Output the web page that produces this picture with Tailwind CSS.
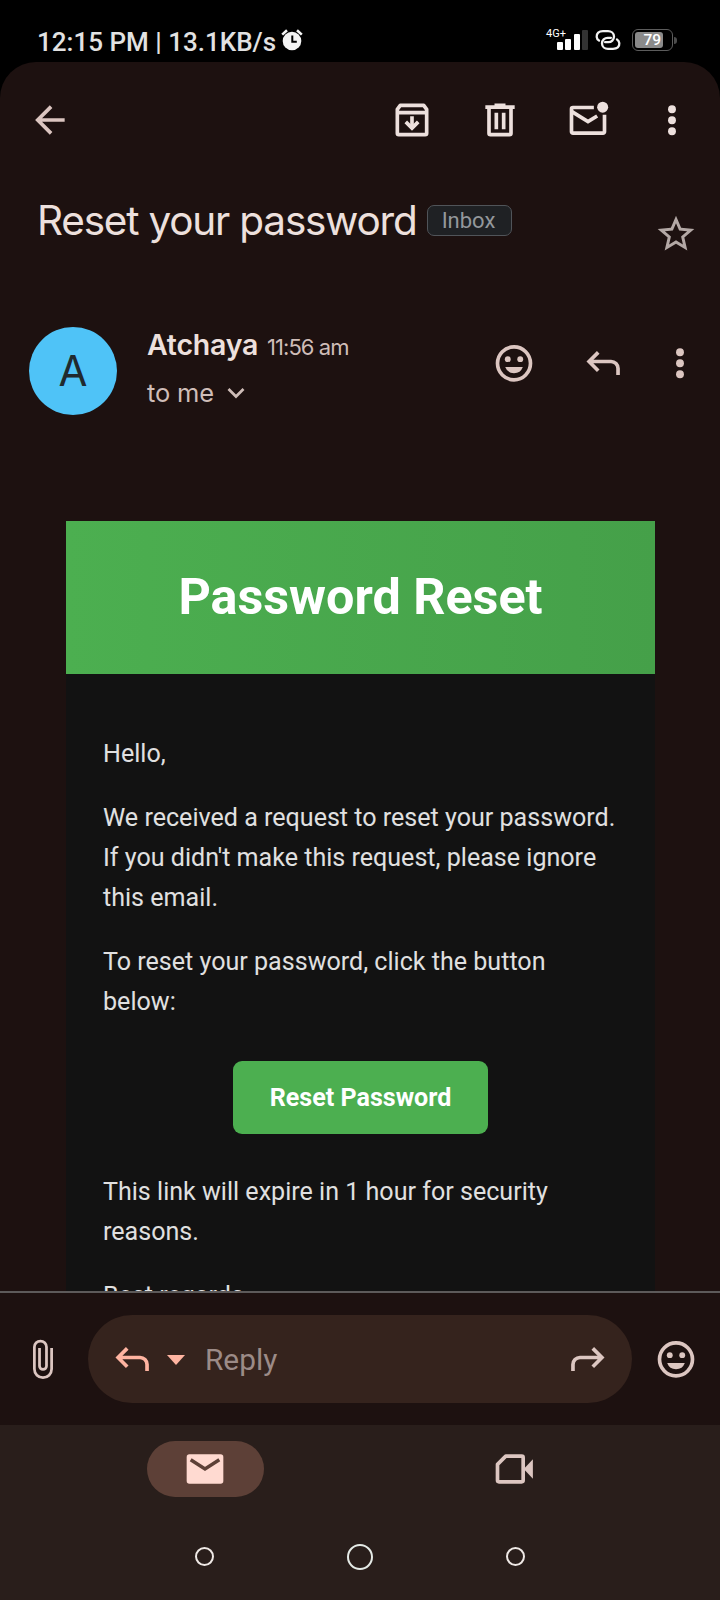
<!DOCTYPE html>
<html lang="en">
<head>
<meta charset="utf-8">
<title>Reset your password</title>
<script src="https://cdn.jsdelivr.net/npm/@tailwindcss/browser@4"></script>
</head>
<body class="bg-black">
<svg class="hidden">
  <symbol id="smile" viewBox="0 0 24 24"><circle cx="12" cy="12.200" r="9" fill="none" stroke="currentColor" stroke-width="2"/><circle cx="8.6" cy="9.9" r="1.6" fill="currentColor"/><circle cx="15.4" cy="9.9" r="1.6" fill="currentColor"/><path d="M7.2 14.200h9.6a5.1 5.1 0 0 1-9.6 0z" fill="currentColor"/></symbol>
  <symbol id="reply" viewBox="0 0 24 24"><path d="M9.4 6.2 4.4 11.2l5 5M4.600 11.2h11.800a3.8 3.8 0 0 1 3.800 3.8v3.6" fill="none" stroke="currentColor" stroke-width="2"/></symbol>
  <symbol id="dots" viewBox="0 0 24 24"><circle cx="12" cy="6.100" r="2.15" fill="currentColor"/><circle cx="12" cy="12.100" r="2.15" fill="currentColor"/><circle cx="12" cy="18.100" r="2.15" fill="currentColor"/></symbol>
</svg>
<div class="flex h-[1600px] w-[720px] flex-col overflow-hidden bg-black font-['Roboto',sans-serif]">
  <header class="flex h-[62px] shrink-0 items-start pl-[37px] pt-[26px]">
    <div class="h-8 w-[244px] whitespace-nowrap text-[26px] font-medium leading-8 text-[#e2e2e2]">12:15 PM | 13.1KB/s</div>
    <svg class="mt-[3px] h-[22px] w-[22px]" viewBox="0 0 22 22"><circle cx="11" cy="12" r="9.3" fill="#f4f4f4"/><path d="M1.2 5.6 6 1.2M20.8 5.6 16 1.2" stroke="#f4f4f4" stroke-width="2.6"/><path d="M11.3 6.5v6.2h4.5" fill="none" stroke="#000" stroke-width="2"/></svg>
    <div class="ml-[243px] mt-[2px] flex">
      <span class="h-3 w-[11px] text-[11px] leading-3 text-white">4G+</span>
      <div class="mt-[2px] flex h-5 items-end gap-[2.4px]">
        <i class="h-2 w-[6px] rounded-[1px] bg-white"></i><i class="h-[11px] w-[6px] rounded-[1px] bg-white"></i><i class="h-4 w-[6px] rounded-[1px] bg-white"></i><i class="h-5 w-[6px] rounded-[1px] bg-[#333]"></i>
      </div>
    </div>
    <svg class="ml-[7px] mt-[4px] h-5 w-[26px]" viewBox="0 0 26 20" fill="none" stroke="#f2f2f2" stroke-width="2.300" stroke-linecap="round"><path d="M4 10.6C1.200 9 .9 4.800 3.200 2.600 4.700 1.300 6 1.200 8 1.200h5c3.200 0 6 2.200 6 5.400s-2.600 5.600-5.600 5.600h-3.300"/><path d="M22 9.400c2.800 1.600 3.100 5.800.8 8-1.500 1.300-2.800 1.400-4.800 1.400h-5c-3.200 0-6-2.200-6-5.400S9.600 7.800 12.600 7.800h3.300"/></svg>
    <div class="ml-[11px] mt-[3px] flex items-center">
      <div class="flex h-[22px] w-[41px] items-center rounded-[6px] border-[1.5px] border-[#5c5c5c] p-[2px]">
        <div class="flex h-4 w-7 items-center justify-end rounded-[3px] bg-[#8a8a8a] pr-[2px] text-[15.5px] font-medium leading-none text-white"><span class="pt-px">79</span></div>
      </div>
      <i class="ml-px h-[7px] w-[2.5px] rounded-r-full bg-[#4c4c4c]"></i>
    </div>
  </header>

  <main class="flex h-[1229px] shrink-0 flex-col overflow-hidden rounded-t-[36px] bg-[#1d1110] text-[#ede0dd]">
    <div class="flex h-[116px] shrink-0 items-start pl-[28px] pt-[36px]">
      <svg class="h-11 w-11 text-[#dbc5c0]" viewBox="0 0 24 24" fill="none" stroke="currentColor" stroke-width="2"><path d="M12.600 4.700 5.300 12l7.300 7.300M5.300 12H20"/></svg>
      <svg class="ml-[318px] h-11 w-11" viewBox="0 0 24 24" fill="none" stroke="currentColor" stroke-width="2"><path d="M4 8v11.200a.8.8 0 0 0 .8.800h14.400a.8.8 0 0 0 .8-.8V6.200L18.400 4H5.600L4 6.200z" stroke-linejoin="round"/><path d="M4 8h16M12 10v6"/><path d="m8.600 13 3.400 3.400 3.400-3.400"/></svg>
      <svg class="ml-[44px] h-11 w-11" viewBox="0 0 24 24" fill="none" stroke="currentColor" stroke-width="2"><path d="M6 5v14.200a.8.8 0 0 0 .8.800h10.400a.8.8 0 0 0 .8-.8V5"/><path d="M4 5h16M9 4h6"/><path d="M10 8v9M14 8v9"/></svg>
      <svg class="ml-[44px] h-11 w-11" viewBox="0 0 24 24" fill="none" stroke="currentColor" stroke-width="2"><path d="M15.200 5.200H3.800a.8.800 0 0 0-.8.800v12.400a.8.8 0 0 0 .8.800h16.400a.8.8 0 0 0 .8-.8V9.200"/><path d="m3 7.300 9 5.600 5-3.100"/><circle cx="20" cy="5" r="3" fill="currentColor" stroke="none"/></svg>
      <svg class="ml-[40px] h-11 w-11"><use href="#dots"/></svg>
    </div>

    <div class="flex h-[148px] shrink-0 items-start pl-[37px] pt-[16px]">
      <h1 class="h-[52px] w-[390px] whitespace-nowrap pt-px font-['Inter',sans-serif] text-[40.5px] font-normal leading-[52px] tracking-[-1.200px]">Reset your password</h1>
      <div class="mt-[11px] flex h-[31px] w-[85px] items-center justify-center rounded-[7px] border border-[#505459] bg-[#1f2124] pr-[2px] text-[22px] leading-none text-[#93979b]">Inbox</div>
      <svg class="ml-[142px] mt-[18px] h-11 w-11 text-[#b3a8a5]" viewBox="0 0 24 24" fill="currentColor"><path d="m22 9.240-7.190-.62L12 2 9.190 8.630 2 9.240l5.460 4.730L5.820 21 12 17.270 18.180 21l-1.630-7.030L22 9.240zM12 15.400l-3.760 2.270 1-4.280-3.320-2.880 4.380-.38L12 6.100l1.710 4.040 4.380.38-3.320 2.880 1 4.280L12 15.400z"/></svg>
    </div>

    <div class="flex h-[195px] shrink-0 items-start pl-[29px]">
      <div class="mt-px flex size-[88px] shrink-0 items-center justify-center rounded-full bg-[#4fc3f7] pb-[2px] font-['Inter',sans-serif] text-[42px] text-[#202a2e]">A</div>
      <div class="ml-[30px] w-[345px] whitespace-nowrap">
        <div class="flex h-[39px] items-baseline font-['Inter',sans-serif] leading-[38px]">
          <span class="w-[120px] text-[28.5px] font-semibold tracking-[-0.2px]">Atchaya</span>
          <span class="text-[22px] tracking-[-0.95px] text-[#cfbdb8]">11:56 am</span>
        </div>
        <div class="flex h-[56px] items-center text-[#cfbdb8]">
          <span class="w-[77px] font-['Inter',sans-serif] text-[25.500px] tracking-[-0.15px]">to me</span>
          <svg class="h-6 w-6" viewBox="0 0 24 24" fill="none" stroke="currentColor" stroke-width="2.700"><path d="m4.500 8 7.500 7.500L19.500 8"/></svg>
        </div>
      </div>
      <svg class="mt-[15px] h-11 w-11 text-[#dcc6c1]"><use href="#smile"/></svg>
      <svg class="ml-[45px] mt-[15px] h-11 w-11 text-[#dcc6c1]"><use href="#reply"/></svg>
      <svg class="ml-[33px] mt-[15px] h-11 w-11 text-[#dcc6c1]"><use href="#dots"/></svg>
    </div>

    <article class="ml-[66px] w-[589px] shrink-0 bg-[#121212] text-[25.080px] leading-10 text-[#e0e0e0]">
      <h2 class="flex h-[153px] items-center justify-center bg-gradient-to-r from-[#4caf50] to-[#45a049] pb-[2px] text-[50.300px] font-bold text-white">Password Reset</h2>
      <div class="flex flex-col gap-6 whitespace-nowrap pl-[37px] pt-[60px]">
        <p>Hello,</p>
        <p>We received a request to reset your password.<br>If you didn't make this request, please ignore<br>this email.</p>
        <p>To reset your password, click the button<br>below:</p>
        <div class="mb-4 ml-[130px] mt-[15px] flex h-[73px] w-[255px] items-center justify-center rounded-[9px] bg-[#4caf50] font-bold text-white">Reset Password</div>
        <p class="mt-[-2px]">This link will expire in 1 hour for security<br>reasons.</p>
        <p>Best regards,</p>
      </div>
    </article>
  </main>

  <section class="flex h-[134px] shrink-0 items-center border-t-2 border-[#5d5a5a] bg-[#1d1110] text-[#dcc6c1]">
    <svg class="ml-[21px] h-11 w-11" viewBox="0 0 24 24" fill="none" stroke="currentColor" stroke-width="1.500"><path d="M16.700 6v11.500a4.700 4.700 0 0 1-9.400 0V5.500a3.300 3.300 0 0 1 6.600 0v10.300a1.900 1.900 0 0 1-3.800 0V6"/></svg>
    <div class="ml-[23px] flex h-[88px] w-[544px] items-center rounded-full bg-[#35231d]">
      <svg class="ml-[22px] h-11 w-11 text-[#ffb4a1]"><use href="#reply"/></svg>
      <svg class="ml-[13px] mt-[2px] h-[10px] w-[18px]" viewBox="0 0 18 10"><path d="M0 0h18L9 10z" fill="#ffb4a1"/></svg>
      <span class="ml-[20px] w-[140px] pt-[2px] text-[29.8px] text-[#9c8b87]">Reply</span>
      <svg class="ml-[221px] h-11 w-11 -scale-x-100"><use href="#reply"/></svg>
    </div>
    <svg class="ml-[22px] h-11 w-11"><use href="#smile"/></svg>
  </section>

  <footer class="h-[175px] shrink-0 bg-[#291e1b]">
    <div class="flex h-[88px] pl-[147px] pt-[16px]">
      <div class="flex h-14 w-[117px] items-center justify-center rounded-full bg-[#5d4037] pr-[1px]"><svg class="h-11 w-11" viewBox="0 0 24 24"><rect x="2" y="4" width="20" height="16" rx="1.500" fill="#ffdad1"/><path d="m4.200 7 7.800 5 7.800-5" fill="none" stroke="#5d4037" stroke-width="1.900"/></svg></div>
      <svg class="ml-[228px] mt-[6px] h-11 w-11 text-[#dcc6c1]" viewBox="0 0 24 24" fill="none" stroke="currentColor" stroke-width="2"><path d="M3 9.500v8.700a.8.8 0 0 0 .8.800h12.400a.8.8 0 0 0 .8-.8V5.800a.8.8 0 0 0-.8-.8H7.500z" stroke-linejoin="round"/><path d="m17.300 12 5-5.300v10.600z" fill="currentColor" stroke="none"/></svg>
    </div>
    <div class="flex h-[87px] items-center pl-[195px]">
      <i class="size-[19px] rounded-full border-2 border-[#efe9e6]"></i>
      <i class="ml-[133px] size-[26px] rounded-full border-2 border-[#e4eae6]"></i>
      <i class="ml-[133px] size-[19px] rounded-full border-2 border-[#efe9e6]"></i>
    </div>
  </footer>
</div>
</body>
</html>
